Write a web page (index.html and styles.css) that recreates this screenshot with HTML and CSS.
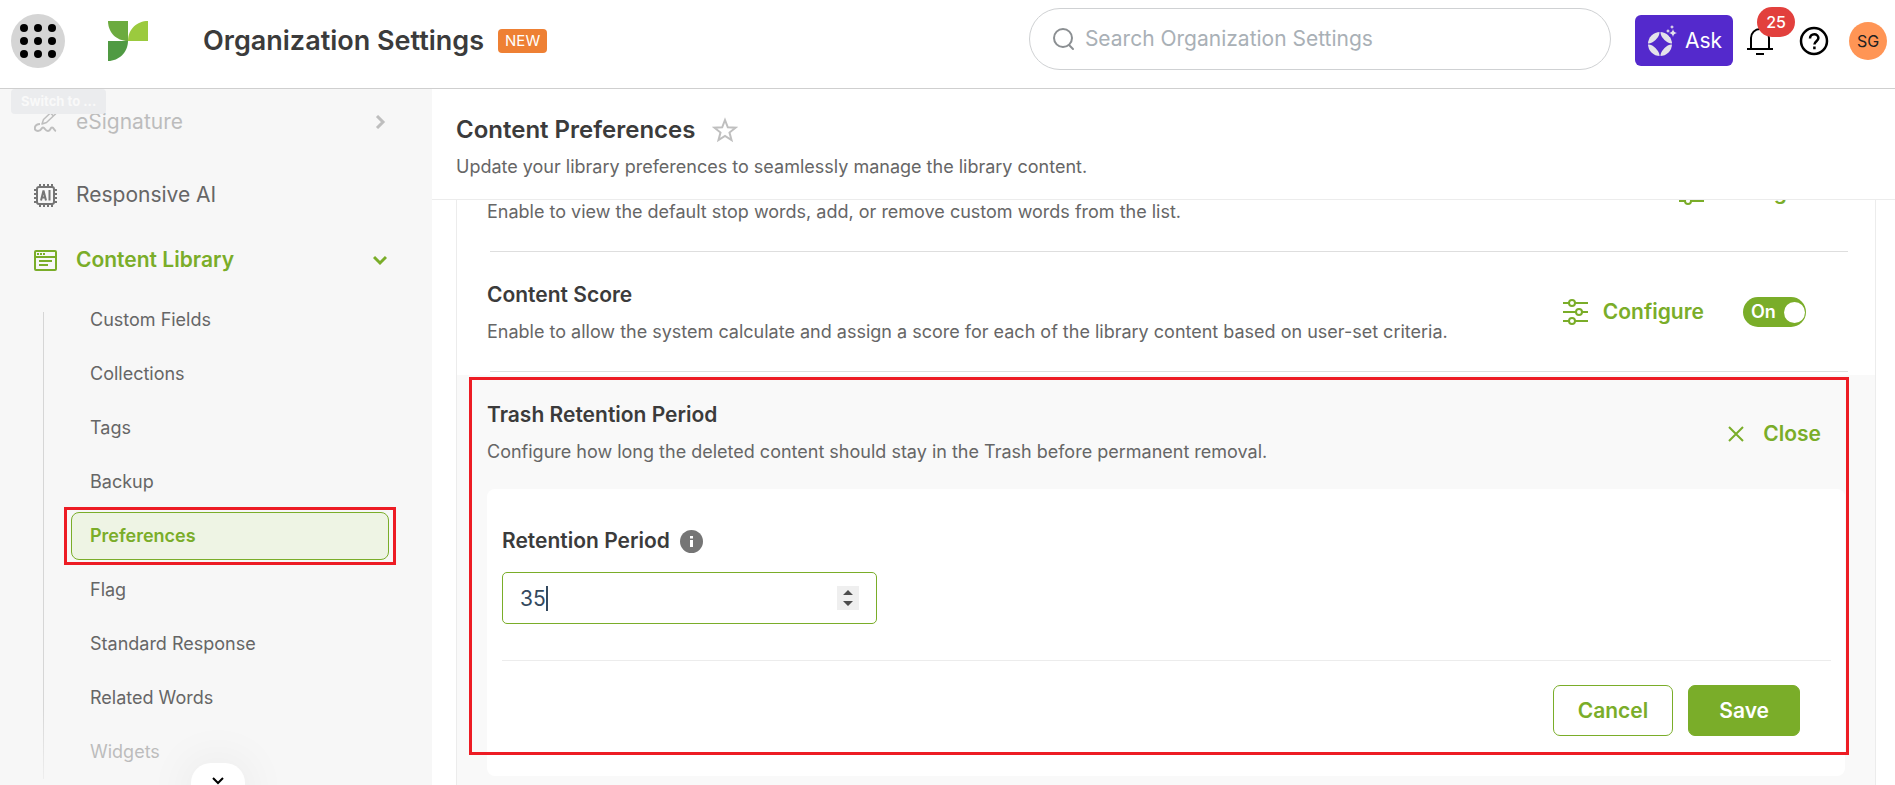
FILE: index.html
```html
<!doctype html>
<html lang="en">
<head>
  <meta charset="utf-8">
  <title>Organization Settings</title>
  <link rel="stylesheet" href="styles.css">
</head>
<body>
<header class="topbar">
  <button class="apps" type="button" aria-label="Switch to ...">
    <svg width="54" height="54" viewBox="0 0 54 54">
      <circle cx="13" cy="14" r="4"/><circle cx="27" cy="14" r="4"/><circle cx="41" cy="14" r="4"/>
      <circle cx="13" cy="27" r="4"/><circle cx="27" cy="27" r="4"/><circle cx="41" cy="27" r="4"/>
      <circle cx="13" cy="40" r="4"/><circle cx="27" cy="40" r="4"/><circle cx="41" cy="40" r="4"/>
    </svg>
    <span class="tooltip">Switch to ...</span>
  </button>
  <svg class="logo" width="40" height="40" viewBox="0 0 40 40">
    <path fill="#6cab3f" d="M0 0h20v20C8 20 0 11 0 0z"/>
    <path fill="#9bca3e" d="M40 0v20H20C20 8 29 0 40 0z"/>
    <path fill="#509a43" d="M0 20h20c0 11-9 20-20 20z"/>
  </svg>
  <h1 class="topbar_title">Organization Settings</h1>
  <span class="new">NEW</span>
  <label class="search">
    <svg width="24" height="24" viewBox="0 0 24 24" fill="none" stroke="#8b8f92" stroke-width="2" stroke-linecap="round">
      <circle cx="11" cy="11" r="9"/><path d="M17 18l4 4"/>
    </svg>
    <input type="search" placeholder="Search Organization Settings" aria-label="Search Organization Settings">
  </label>
  <button class="ask" type="button">
    <svg width="30" height="32" viewBox="0 0 30 32">
      <circle cx="13" cy="19" r="12" fill="#e4e2ea"/>
      <path fill="#5429cc" d="M13 8q3 8 11 11q-8 3-11 11q-3-8-11-11q8-3 11-11z"/>
      <path stroke="#5429cc" d="M0 19h26M13 6v26"/>
      <circle cx="26" cy="8" r="5" fill="#5429cc"/>
      <path fill="#e4e2ea" d="M26 4q.5 3.500 4 4q-3.500.5-4 4q-.5-3.500-4-4q3.500-.5 4-4zM25 0l.7 1.300 1.300.7-1.300.7-.7 1.300-.7-1.300-1.300-.7 1.300-.7zM21 4l.7 1.300 1.300.7-1.300.7-.7 1.300-.7-1.300-1.300-.7 1.300-.7z"/>
    </svg>
    Ask
  </button>
  <button class="bell" type="button" aria-label="Notifications">
    <svg width="26" height="30" viewBox="0 0 26 30" fill="none" stroke="#000" stroke-width="2">
      <path d="M4 23V12a9 9 0 0 1 18 0v11M0 23h26M9 28h8"/>
    </svg>
    <span class="bell_count">25</span>
  </button>
  <button class="help" type="button" aria-label="Help">
    <svg width="30" height="30" viewBox="0 0 30 30" fill="none" stroke="#000" stroke-width="2.500">
      <circle cx="15" cy="15" r="13"/>
      <path d="M11 12.500C11 10 12.800 8.300 15.200 8.300s4.200 1.600 4.200 3.800c0 2.900-4 3.300-4 6.400M15.400 20.500v2.800"/>
    </svg>
  </button>
  <button class="avatar" type="button">SG</button>
</header>

<div class="layout">
  <nav class="sidebar">
    <a class="sidebar_item faded" href="#">
      <svg width="23" height="24" viewBox="0 0 23 24" fill="none" stroke="#6b6b6b" stroke-width="2" stroke-linejoin="round">
        <path stroke-width="1.500" d="M8 14l1.500-4.500L18.500 1l3 3-9 8.500zM16.500 3l3 3"/>
        <path d="M6 14c-6 0-7 7-2 7 4 0 3-3.500 5-3.500S11 21 14 21s2-3.500 4-3.500 2 3 4 3.500"/>
      </svg>
      <span>eSignature</span>
      <svg class="sidebar_arrow" width="14" height="14" viewBox="0 0 14 14" fill="none" stroke="#6b6b6b" stroke-width="3"><path d="M4 1l6 6-6 6"/></svg>
    </a>
    <a class="sidebar_item" href="#">
      <svg width="23" height="24" viewBox="0 0 23 24" fill="none" stroke="#757575" stroke-width="2">
        <rect x="3" y="4" width="17" height="17" rx="2"/>
        <path d="M6 1v3M10 1v3M14 1v3M18 1v3M6 21v3M10 21v3M14 21v3M18 21v3M0 7h3M0 11h3M0 15h3M0 19h3M20 7h3M20 11h3M20 15h3M20 19h3"/>
        <path d="M7 17.500l2.500-10 2.500 10M7.500 14.500h4M15.500 7v10.500"/>
      </svg>
      <span>Responsive AI</span>
    </a>
    <a class="sidebar_item open" href="#">
      <svg width="23" height="24" viewBox="0 0 23 24" fill="none" stroke="#7aad29" stroke-width="2">
        <rect x="1" y="3" width="21" height="19" rx="1"/>
        <path d="M1 9h21M5 13h13M5 17h9"/><path stroke-dasharray="2 1" d="M3 6h8"/>
      </svg>
      <span>Content Library</span>
      <svg class="sidebar_arrow" width="14" height="14" viewBox="0 0 14 14" fill="none" stroke="#7aad29" stroke-width="3"><path d="M1 4l6 6 6-6"/></svg>
    </a>
    <ul class="submenu">
      <li><a href="#">Custom Fields</a></li>
      <li><a href="#">Collections</a></li>
      <li><a href="#">Tags</a></li>
      <li><a href="#">Backup</a></li>
      <li class="active"><a href="#">Preferences</a></li>
      <li><a href="#">Flag</a></li>
      <li><a href="#">Standard Response</a></li>
      <li><a href="#">Related Words</a></li>
      <li class="faded"><a href="#">Widgets</a></li>
    </ul>
    <button class="more" type="button" aria-label="Scroll down">
      <svg width="12" height="8" viewBox="0 0 12 8" fill="none" stroke="#000" stroke-width="2"><path d="M1 1l5 5 5-5"/></svg>
    </button>
  </nav>

  <main class="main">
    <div class="page-head">
      <h2>Content Preferences
        <svg width="26" height="26" viewBox="0 0 26 26" fill="none" stroke="#bfbfbf" stroke-width="2">
          <path d="M13 3l2.800 7.300 7.700.4-6 4.900 2 7.500-6.500-4.200-6.500 4.200 2-7.500-6-4.900 7.700-.4z"/>
        </svg>
      </h2>
      <p>Update your library preferences to seamlessly manage the library content.</p>
    </div>

    <div class="scroll">
      <div class="card">
        <section class="row">
          <div class="row_text">
            <p>Enable to view the default stop words, add, or remove custom words from the list.</p>
          </div>
          <button class="link" type="button">
            <svg width="25" height="26" viewBox="0 0 25 26" fill="none" stroke="#7aad29" stroke-width="2">
              <path d="M0 4h6M12 4h13M0 13h13M19 13h6M0 22h6M12 22h13"/>
              <circle cx="9" cy="4" r="3"/><circle cx="16" cy="13" r="3"/><circle cx="9" cy="22" r="3"/>
            </svg>
            Configure
          </button>
        </section>
        <section class="row">
          <div class="row_text">
            <h3>Content Score</h3>
            <p>Enable to allow the system calculate and assign a score for each of the library content based on user-set criteria.</p>
          </div>
          <button class="link" type="button">
            <svg width="25" height="26" viewBox="0 0 25 26" fill="none" stroke="#7aad29" stroke-width="2">
              <path d="M0 4h6M12 4h13M0 13h13M19 13h6M0 22h6M12 22h13"/>
              <circle cx="9" cy="4" r="3"/><circle cx="16" cy="13" r="3"/><circle cx="9" cy="22" r="3"/>
            </svg>
            Configure
          </button>
          <label class="toggle"><input type="checkbox" checked aria-label="Content Score"><span>On</span></label>
        </section>
        <section class="panel">
          <div class="panel_head">
            <div class="row_text">
              <h3>Trash Retention Period</h3>
              <p>Configure how long the deleted content should stay in the Trash before permanent removal.</p>
            </div>
            <button class="link close" type="button">
              <svg width="16" height="16" viewBox="0 0 16 16" fill="none" stroke="#7aad29" stroke-width="2"><path d="M1 1l14 14M15 1L1 15"/></svg>
              Close
            </button>
          </div>
          <form class="panel_body">
            <div class="field_label">
              <label for="period">Retention Period</label>
              <svg width="23" height="23" viewBox="0 0 23 23">
                <circle cx="11.500" cy="11.500" r="11.500" fill="#757575"/>
                <path stroke="#fff" stroke-width="3" d="M11.500 10v7M11.500 6v2.500"/>
              </svg>
            </div>
            <div class="field">
              <input id="period" type="number" value="35">
              <i class="caret"></i>
              <svg class="spin" width="22" height="24" viewBox="0 0 22 24">
                <path fill="#efefef" d="M0 0h22v24H0z"/>
                <path fill="#4d4d4d" d="M6 9l5-5 5 5zM6 15l5 5 5-5z"/>
              </svg>
            </div>
            <div class="buttons">
              <button class="btn" type="button">Cancel</button>
              <button class="btn btn-save" type="button">Save</button>
            </div>
          </form>
        </section>
      </div>
    </div>
  </main>
</div>
</body>
</html>
```
FILE: styles.css
```css
* {
  box-sizing: border-box;
}
body {
  margin: 0;
  height: 100vh;
  display: flex;
  flex-direction: column;
  overflow: hidden;
  background: #fff;
  color: #3b3b3b;
  font-family: Inter, "Liberation Sans", sans-serif;
}
h1, h2, h3, p, ul {
  margin: 0;
  padding: 0;
}
button, input {
  font-family: inherit;
}
button {
  border: 0;
  padding: 0;
  background: none;
  cursor: pointer;
}
a {
  color: inherit;
  text-decoration: none;
}
svg {
  display: block;
  flex: none;
}

/* top bar */
.topbar {
  flex: none;
  display: flex;
  align-items: center;
  height: 89px;
  padding: 0 8px 7px 11px;
  border-bottom: 1px solid #cfcfcf;
}
.apps {
  position: relative;
  width: 54px;
  height: 54px;
  border-radius: 50%;
  background: #d5d5d5;
}
.tooltip {
  position: absolute;
  left: 0;
  top: 75px;
  z-index: 2;
  padding: 0 10px;
  border-radius: 4px;
  background: #ebecee;
  color: #f9f9f9;
  font-size: 13px;
  line-height: 25px;
  font-weight: 700;
  white-space: nowrap;
}
.logo {
  margin: 0 55px 0 43px;
}
.topbar_title {
  font-size: 27px;
  line-height: 32px;
  font-weight: 600;
}
.new {
  margin-left: 14px;
  padding: 0 7px;
  border-radius: 4px;
  background: #ee8034;
  color: #fff;
  font-size: 15px;
  line-height: 24px;
}
.search {
  display: flex;
  align-items: center;
  gap: 9px;
  width: 582px;
  height: 62px;
  margin: 0 0 4px auto;
  padding: 0 22px;
  border: 1px solid #cfd1d3;
  border-radius: 31px;
}
.search input {
  flex: 1;
  border: 0;
  padding: 0;
  outline: 0;
  background: none;
  font-size: 21px;
}
.search input::placeholder {
  color: #a9b0b6;
}
.ask {
  display: flex;
  align-items: center;
  gap: 8px;
  height: 51px;
  margin-left: 24px;
  padding: 0 11px 0 12px;
  border-radius: 6px;
  background: #5429cc;
  color: #fff;
  font-size: 21px;
}
.bell {
  position: relative;
  margin-left: 14px;
}
.bell_count {
  position: absolute;
  left: 10px;
  top: -19px;
  width: 38px;
  border-radius: 15px;
  background: #e2403d;
  color: #fff;
  font-size: 16px;
  line-height: 30px;
  font-weight: 500;
}
.help {
  margin-left: 26px;
}
.avatar {
  width: 38px;
  height: 38px;
  margin-left: 20px;
  border-radius: 50%;
  background: #ff9555;
  color: #222;
  font-size: 16px;
}

.layout {
  flex: 1;
  display: flex;
  min-height: 0;
}

/* sidebar */
.sidebar {
  position: relative;
  flex: none;
  width: 432px;
  overflow: hidden;
  background: #f7f7f7;
}
.sidebar_item {
  display: flex;
  align-items: center;
  gap: 19px;
  height: 65px;
  padding: 0 45px 0 34px;
  color: #666;
  font-size: 21px;
}
.sidebar_item:first-child {
  margin-bottom: 8px;
}
.sidebar_item.open {
  color: #7aad29;
  font-weight: 600;
}
.sidebar_arrow {
  margin-left: auto;
}
.faded {
  opacity: .4;
}
.submenu {
  position: relative;
  padding: 1px 43px 0 71px;
  list-style: none;
}
.submenu::before {
  content: "";
  position: absolute;
  left: 43px;
  top: 20px;
  bottom: 0;
  width: 1px;
  background: linear-gradient(#d6d6d6 85%, #eee);
}
.submenu li {
  padding: 3px 0;
}
.submenu a {
  display: block;
  padding: 0 18px;
  border: 1px solid transparent;
  border-radius: 8px;
  color: #666;
  font-size: 18px;
  line-height: 46px;
}
.submenu .active {
  position: relative;
}
.submenu .active a {
  border-color: #7aad29;
  background: #eef4e4;
  color: #7aad29;
  font-weight: 600;
}
.submenu .active::before {
  content: "";
  position: absolute;
  inset: -2px -7px;
  border: 3px solid #ed1c24;
}
.more {
  position: absolute;
  left: 191px;
  bottom: -32px;
  display: flex;
  justify-content: center;
  width: 54px;
  height: 54px;
  padding-top: 14px;
  border-radius: 20px;
  background: #fff;
  box-shadow: 0 0 50px rgba(0, 0, 0, .07);
}

/* content */
.main {
  flex: 1;
  display: flex;
  flex-direction: column;
  min-width: 0;
}
.page-head {
  flex: none;
  height: 111px;
  padding: 25px 24px 0;
  border-bottom: 1px solid #ececec;
}
.page-head h2 {
  display: flex;
  align-items: center;
  gap: 17px;
  font-size: 24px;
  line-height: 32px;
  font-weight: 600;
}
.page-head p,
.row_text p {
  color: #666;
  font-size: 18px;
  line-height: 24px;
}
.page-head p {
  margin-top: 9px;
}
.scroll {
  flex: 1;
  overflow: hidden;
  padding: 0 19px 0 24px;
}
/* the list is scrolled down so the first row is partly hidden */
.card {
  margin-top: -69px;
  border: 1px solid #ececec;
}
.row {
  display: flex;
  align-items: center;
  height: 120px;
  margin: 0 27px 0 33px;
  padding-right: 28px;
  border-bottom: 1px solid #dedede;
}
.row .row_text {
  padding-top: 3px;
  margin-left: -3px;
}
.row:first-child .row_text {
  padding-top: 40px;
}
.row:nth-child(2) {
  padding-right: 42px;
}
.row_text {
  flex: 1;
}
.row_text h3 {
  margin-bottom: 13px;
  font-size: 21px;
  line-height: 24px;
  font-weight: 600;
}
.link {
  display: flex;
  align-items: center;
  gap: 15px;
  color: #7aad29;
  font-size: 21px;
  line-height: 24px;
  font-weight: 600;
}
.toggle {
  position: relative;
  width: 63px;
  height: 30px;
  margin-left: 39px;
}
.toggle input {
  appearance: none;
  width: 63px;
  height: 30px;
  margin: 0;
  border-radius: 15px;
  background: #7aad29;
}
.toggle input::after {
  content: "";
  position: absolute;
  right: 1px;
  top: 5px;
  width: 21px;
  height: 21px;
  border-radius: 50%;
  background: #fff;
}
.toggle span {
  position: absolute;
  left: 8px;
  top: 0;
  color: #fff;
  font-size: 18px;
  line-height: 30px;
  font-weight: 600;
}

/* opened panel */
.panel {
  position: relative;
  margin-top: 3px;
  padding: 28px 30px 30px 30px;
  background: #f9f9f9;
}
.panel::after {
  content: "";
  position: absolute;
  left: 12px;
  right: 26px;
  top: 2px;
  height: 372px;
  border: 3px solid #ed1c24;
  pointer-events: none;
}
.panel_head {
  display: flex;
  align-items: center;
  padding-right: 24px;
  margin-bottom: 25px;
}
.close {
  gap: 19px;
}
.panel_body {
  padding: 40px 14px 40px 15px;
  border-radius: 8px;
  background: #fff;
}
.field_label {
  display: flex;
  align-items: center;
  gap: 10px;
  font-size: 21px;
  line-height: 24px;
  font-weight: 600;
}
.field {
  position: relative;
  width: 375px;
  margin: 19px 0 36px;
}
.field input {
  display: block;
  width: 100%;
  height: 52px;
  padding: 0 50px 0 17px;
  border: 1px solid #7aad29;
  border-radius: 5px;
  outline: 0;
  color: #34495e;
  font-size: 21px;
}
.field input::-webkit-inner-spin-button {
  appearance: none;
}
.spin {
  position: absolute;
  right: 18px;
  top: 14px;
}
.caret {
  position: absolute;
  left: 44px;
  top: 14px;
  width: 2px;
  height: 25px;
  background: #34495e;
}
.buttons {
  display: flex;
  justify-content: flex-end;
  gap: 15px;
  padding: 24px 31px 0 0;
  border-top: 1px solid #ececec;
}
.btn {
  height: 51px;
  padding: 0 24px;
  border: 1px solid #7aad29;
  border-radius: 7px;
  color: #7aad29;
  font-size: 21px;
  font-weight: 600;
}
.btn-save {
  padding: 0 30px;
  background: #7aad29;
  color: #fff;
}
```
